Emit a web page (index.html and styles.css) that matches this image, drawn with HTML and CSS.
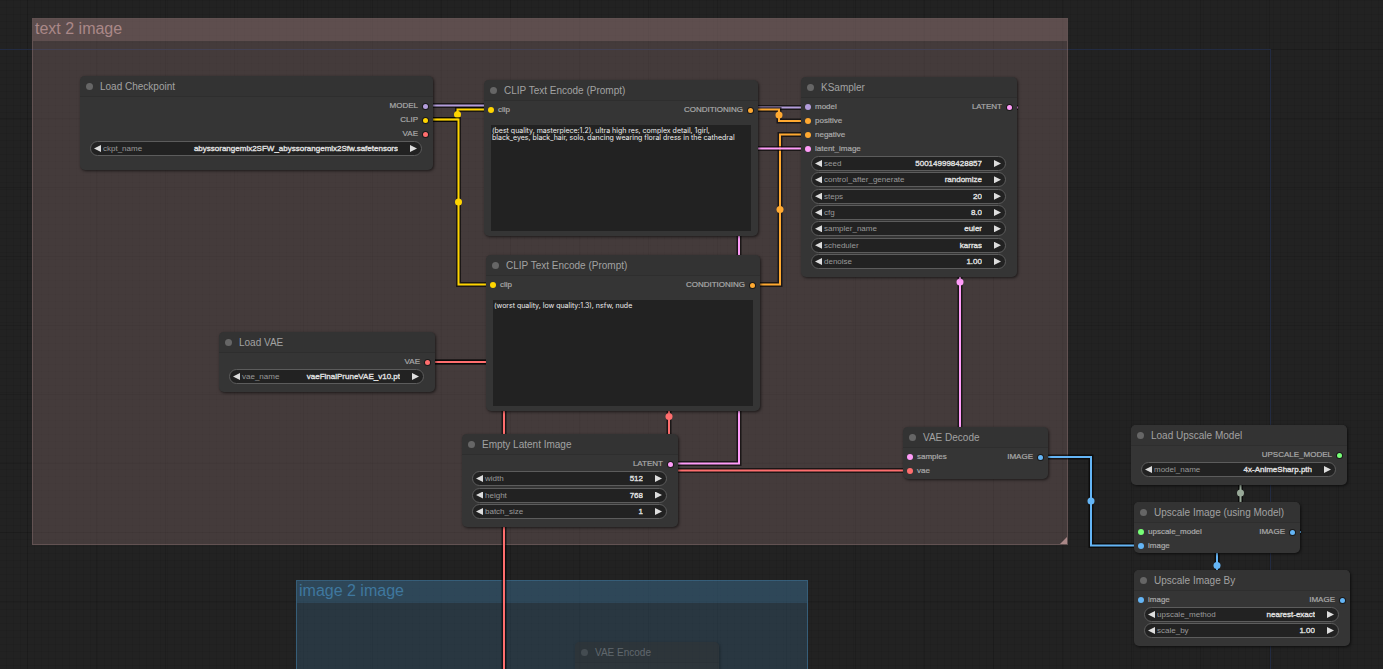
FILE: index.html
```html
<!DOCTYPE html>
<html lang="en">
<head>
<meta charset="utf-8">
<title>Node graph</title>
<link rel="stylesheet" href="styles.css">
</head>
<body>
<main class="canvas">
  <div class="bounds"></div>

  <section class="group group-text">
    <h2 class="group-title">text 2 image</h2>
    <span class="group-handle"></span>
  </section>
  <section class="group group-image">
    <h2 class="group-title">image 2 image</h2>
  </section>

  <svg class="links" aria-hidden="true">
    <defs>
      <path id="l-model" d="M425 105.5H616V107.5H808"/>
      <path id="l-clip1" d="M425 119.5H457.5V109.5H490"/>
      <path id="l-clip2" d="M425 119.5H458.5V284.5H492"/>
      <path id="l-pos" d="M751 109.5H779V121H808"/>
      <path id="l-neg" d="M753 284.5H780V134.5H808"/>
      <path id="l-empty" d="M670 463.5H739V148.5H808"/>
      <path id="l-vae1" d="M427 362H504V2000"/>
      <path id="l-vae2" d="M427 362H669V470.5H910"/>
      <path id="l-latent" d="M1010 107.5H1018H960V457H903H910"/>
      <path id="l-up" d="M1340 455H1347H1240.5V532H1134H1141"/>
      <path id="l-img1" d="M1041 457H1091V545.5H1141"/>
      <path id="l-img2" d="M1293 532H1301H1217V600H1134H1141"/>
    </defs>
    <g class="link vae"><use href="#l-vae1" class="edge"/><use href="#l-vae1"/></g>
    <g class="link vae"><use href="#l-vae2" class="edge"/><use href="#l-vae2"/><circle cx="669" cy="416.5" r="3.5"/></g>
    <g class="link model"><use href="#l-model" class="edge"/><use href="#l-model"/></g>
    <g class="link clip"><use href="#l-clip1" class="edge"/><use href="#l-clip1"/><circle cx="457.5" cy="114.5" r="3.5"/></g>
    <g class="link clip"><use href="#l-clip2" class="edge"/><use href="#l-clip2"/><circle cx="458.5" cy="202" r="3.5"/></g>
    <g class="link cond"><use href="#l-pos" class="edge"/><use href="#l-pos"/><circle cx="779" cy="115" r="3.5"/></g>
    <g class="link cond"><use href="#l-neg" class="edge"/><use href="#l-neg"/><circle cx="780" cy="209.5" r="3.5"/></g>
    <g class="link latent"><use href="#l-empty" class="edge"/><use href="#l-empty"/></g>
    <g class="link latent"><use href="#l-latent" class="edge"/><use href="#l-latent"/><circle cx="960" cy="282" r="3.5"/></g>
    <g class="link upscale"><use href="#l-up" class="edge"/><use href="#l-up"/><circle cx="1240.5" cy="493" r="3.5"/></g>
    <g class="link image"><use href="#l-img1" class="edge"/><use href="#l-img1"/><circle cx="1091" cy="501" r="3.5"/></g>
    <g class="link image"><use href="#l-img2" class="edge"/><use href="#l-img2"/><circle cx="1217" cy="565.5" r="3.5"/></g>
  </svg>

  <article class="node n-checkpoint">
    <header class="head"><button class="fold" aria-label="Collapse"></button><h3 class="name">Load Checkpoint</h3></header>
    <div class="slots">
      <ul class="ins"></ul>
      <ul class="outs"><li class="model">MODEL</li><li class="clip">CLIP</li><li class="vae">VAE</li></ul>
    </div>
    <div class="widgets">
      <div class="widget"><button class="prev" aria-label="Previous"></button><label for="ckpt">ckpt_name</label><select id="ckpt"><option>abyssorangemix2SFW_abyssorangemix2Sfw.safetensors</option></select><button class="next" aria-label="Next"></button></div>
    </div>
  </article>

  <article class="node n-positive">
    <header class="head"><button class="fold" aria-label="Collapse"></button><h3 class="name">CLIP Text Encode (Prompt)</h3></header>
    <div class="slots">
      <ul class="ins"><li class="clip">clip</li></ul>
      <ul class="outs"><li class="cond">CONDITIONING</li></ul>
    </div>
    <textarea class="prompt" aria-label="Positive prompt" spellcheck="false">(best quality, masterpiece:1.2), ultra high res, complex detail, 1girl,
black_eyes, black_hair, solo, dancing wearing floral dress in the cathedral</textarea>
  </article>

  <article class="node n-negative">
    <header class="head"><button class="fold" aria-label="Collapse"></button><h3 class="name">CLIP Text Encode (Prompt)</h3></header>
    <div class="slots">
      <ul class="ins"><li class="clip">clip</li></ul>
      <ul class="outs"><li class="cond">CONDITIONING</li></ul>
    </div>
    <textarea class="prompt" aria-label="Negative prompt" spellcheck="false">(worst quality, low quality:1.3), nsfw, nude</textarea>
  </article>

  <article class="node n-sampler">
    <header class="head"><button class="fold" aria-label="Collapse"></button><h3 class="name">KSampler</h3></header>
    <div class="slots">
      <ul class="ins"><li class="model">model</li><li class="cond">positive</li><li class="cond">negative</li><li class="latent">latent_image</li></ul>
      <ul class="outs"><li class="latent">LATENT</li></ul>
    </div>
    <div class="widgets">
      <div class="widget"><button class="prev" aria-label="Decrease"></button><label for="seed">seed</label><input id="seed" value="500149998428857"><button class="next" aria-label="Increase"></button></div>
      <div class="widget"><button class="prev" aria-label="Previous"></button><label for="control">control_after_generate</label><select id="control"><option>randomize</option></select><button class="next" aria-label="Next"></button></div>
      <div class="widget"><button class="prev" aria-label="Decrease"></button><label for="steps">steps</label><input id="steps" value="20"><button class="next" aria-label="Increase"></button></div>
      <div class="widget"><button class="prev" aria-label="Decrease"></button><label for="cfg">cfg</label><input id="cfg" value="8.0"><button class="next" aria-label="Increase"></button></div>
      <div class="widget"><button class="prev" aria-label="Previous"></button><label for="sampler">sampler_name</label><select id="sampler"><option>euler</option></select><button class="next" aria-label="Next"></button></div>
      <div class="widget"><button class="prev" aria-label="Previous"></button><label for="scheduler">scheduler</label><select id="scheduler"><option>karras</option></select><button class="next" aria-label="Next"></button></div>
      <div class="widget"><button class="prev" aria-label="Decrease"></button><label for="denoise">denoise</label><input id="denoise" value="1.00"><button class="next" aria-label="Increase"></button></div>
    </div>
  </article>

  <article class="node n-vae">
    <header class="head"><button class="fold" aria-label="Collapse"></button><h3 class="name">Load VAE</h3></header>
    <div class="slots">
      <ul class="ins"></ul>
      <ul class="outs"><li class="vae">VAE</li></ul>
    </div>
    <div class="widgets">
      <div class="widget"><button class="prev" aria-label="Previous"></button><label for="vae">vae_name</label><select id="vae"><option>vaeFinalPruneVAE_v10.pt</option></select><button class="next" aria-label="Next"></button></div>
    </div>
  </article>

  <article class="node n-empty">
    <header class="head"><button class="fold" aria-label="Collapse"></button><h3 class="name">Empty Latent Image</h3></header>
    <div class="slots">
      <ul class="ins"></ul>
      <ul class="outs"><li class="latent">LATENT</li></ul>
    </div>
    <div class="widgets">
      <div class="widget"><button class="prev" aria-label="Decrease"></button><label for="width">width</label><input id="width" value="512"><button class="next" aria-label="Increase"></button></div>
      <div class="widget"><button class="prev" aria-label="Decrease"></button><label for="height">height</label><input id="height" value="768"><button class="next" aria-label="Increase"></button></div>
      <div class="widget"><button class="prev" aria-label="Decrease"></button><label for="batch">batch_size</label><input id="batch" value="1"><button class="next" aria-label="Increase"></button></div>
    </div>
  </article>

  <article class="node n-decode">
    <header class="head"><button class="fold" aria-label="Collapse"></button><h3 class="name">VAE Decode</h3></header>
    <div class="slots">
      <ul class="ins"><li class="latent">samples</li><li class="vae">vae</li></ul>
      <ul class="outs"><li class="image">IMAGE</li></ul>
    </div>
  </article>

  <article class="node n-upmodel">
    <header class="head"><button class="fold" aria-label="Collapse"></button><h3 class="name">Load Upscale Model</h3></header>
    <div class="slots">
      <ul class="ins"></ul>
      <ul class="outs"><li class="on">UPSCALE_MODEL</li></ul>
    </div>
    <div class="widgets">
      <div class="widget"><button class="prev" aria-label="Previous"></button><label for="upmodel">model_name</label><select id="upmodel"><option>4x-AnimeSharp.pth</option></select><button class="next" aria-label="Next"></button></div>
    </div>
  </article>

  <article class="node n-upimage">
    <header class="head"><button class="fold" aria-label="Collapse"></button><h3 class="name">Upscale Image (using Model)</h3></header>
    <div class="slots">
      <ul class="ins"><li class="on">upscale_model</li><li class="image">image</li></ul>
      <ul class="outs"><li class="image">IMAGE</li></ul>
    </div>
  </article>

  <article class="node n-upby">
    <header class="head"><button class="fold" aria-label="Collapse"></button><h3 class="name">Upscale Image By</h3></header>
    <div class="slots">
      <ul class="ins"><li class="image">image</li></ul>
      <ul class="outs"><li class="image">IMAGE</li></ul>
    </div>
    <div class="widgets">
      <div class="widget"><button class="prev" aria-label="Previous"></button><label for="method">upscale_method</label><select id="method"><option>nearest-exact</option></select><button class="next" aria-label="Next"></button></div>
      <div class="widget"><button class="prev" aria-label="Decrease"></button><label for="scale">scale_by</label><input id="scale" value="1.00"><button class="next" aria-label="Increase"></button></div>
    </div>
  </article>

  <article class="node n-encode">
    <header class="head"><button class="fold" aria-label="Collapse"></button><h3 class="name">VAE Encode</h3></header>
  </article>
</main>
</body>
</html>
```
FILE: styles.css
```css
* {
  box-sizing: border-box;
}

body {
  margin: 0;
  background: #212121;
  font-family: "Liberation Sans", Arial, sans-serif;
}

button,
input,
select,
textarea {
  font: inherit;
  margin: 0;
  padding: 0;
  border: 0;
  outline: 0;
  background: none;
  appearance: none;
}

.canvas {
  position: relative;
  width: 100%;
  height: 100vh;
  overflow: hidden;
  background-color: #222;
  background-image:
    linear-gradient(90deg, rgba(0, 0, 0, 0.12) 1px, transparent 1px),
    linear-gradient(rgba(0, 0, 0, 0.12) 1px, transparent 1px),
    linear-gradient(90deg, rgba(0, 0, 0, 0.07) 1px, transparent 1px),
    linear-gradient(rgba(0, 0, 0, 0.07) 1px, transparent 1px);
  background-size: 69px 69px, 69px 69px, 7px 7px, 7px 7px;
  background-position: 27px 49px, 27px 49px, 6px 0, 6px 0;
}

/* Outline of the workspace origin */
.bounds {
  position: absolute;
  left: -1px;
  top: 49px;
  width: 1272px;
  bottom: -1px;
  border: 1px solid #222b42;
}

.links {
  position: absolute;
  inset: 0;
  width: 100%;
  height: 100%;
}

.link {
  fill: none;
  stroke: currentColor;
  stroke-width: 2;
}

.link .edge {
  stroke: rgba(0, 0, 0, 0.6);
  stroke-width: 5;
}

.link circle {
  fill: currentColor;
  stroke: none;
}

.model { --c: #b39ddb; }
.clip { --c: #ffd500; }
.vae { --c: #ff6e6e; }
.cond { --c: #ffa931; }
.latent { --c: #ff9cf9; }
.image { --c: #64b5f6; }
.upscale { --c: #99aa99; }
.on { --c: #77ff77; }

.link {
  color: var(--c);
}

/* Groups */
.group {
  position: absolute;
  border: 1px solid;
}

.group-text {
  left: 32px;
  top: 18px;
  width: 1036px;
  height: 527px;
  color: #aa8888;
  background: rgba(170, 136, 136, 0.25);
  border-color: rgba(170, 136, 136, 0.3);
}

.group-image {
  left: 296px;
  top: 580px;
  width: 512px;
  height: 300px;
  color: #3f789e;
  background: rgba(63, 120, 158, 0.25);
  border-color: rgba(63, 120, 158, 0.6);
}

.group-title {
  margin: 0;
  padding: 0 0 2px 2px;
  font-size: 16px;
  line-height: 20px;
  font-weight: 400;
  position: relative;
}

.group-title::before {
  content: "";
  position: absolute;
  inset: 0;
  background: currentColor;
  opacity: 0.25;
}

.group-handle {
  position: absolute;
  right: 0;
  bottom: 0;
  width: 7px;
  height: 7px;
  background: currentColor;
  clip-path: polygon(100% 0, 100% 100%, 0 100%);
}

/* Nodes */
.node {
  position: absolute;
  display: flex;
  flex-direction: column;
  width: 216px;
  border-radius: 5px;
  background: #353535;
  box-shadow: 1px 1px 3px rgba(0, 0, 0, 0.6);
  color: #aaa;
  font-size: 8px;
}

.n-checkpoint { left: 80px; top: 76px; width: 353px; height: 94px; }
.n-positive { left: 484px; top: 80px; width: 274px; height: 156px; }
.n-negative { left: 486px; top: 255px; width: 274px; height: 156px; }
.n-sampler { left: 801px; top: 77px; height: 200px; }
.n-vae { left: 219px; top: 332px; height: 60px; }
.n-empty { left: 462px; top: 434px; height: 93px; }
.n-decode { left: 903px; top: 427px; width: 145px; height: 52px; }
.n-upmodel { left: 1131px; top: 425px; height: 60px; }
.n-upimage { left: 1134px; top: 502px; width: 166px; height: 51px; }
.n-upby { left: 1134px; top: 570px; height: 76px; }
.n-encode { left: 575px; top: 642px; width: 144px; height: 52px; opacity: 0.45; }

.head {
  display: flex;
  align-items: center;
  gap: 7px;
  height: 21px;
  padding-left: 6px;
  border-radius: 5px 5px 0 0;
  background: #333;
  border-bottom: 1px solid #2e2e2e;
}

.fold {
  width: 7px;
  height: 7px;
  border-radius: 50%;
  background: #666;
}

.name {
  margin: 0;
  padding-top: 1px;
  font-size: 10px;
  line-height: 20px;
  font-weight: 400;
  color: #a2a2a2;
}

.slots {
  display: flex;
  justify-content: space-between;
  padding: 2px 5px 0 4px;
  -webkit-text-stroke: 0.2px #aaa;
}

.slots ul {
  margin: 0;
  padding: 0;
  list-style: none;
}

.slots li {
  display: flex;
  align-items: center;
  gap: 4px;
  height: 14px;
  line-height: 14px;
}

.slots .outs li {
  justify-content: flex-end;
  gap: 5px;
}

.ins li::before,
.outs li::after {
  content: "";
  width: 6px;
  height: 6px;
  border-radius: 50%;
  background: var(--c);
}

.outs li::after {
  width: 5px;
  height: 5px;
  box-shadow: 0 0 0 1px rgba(0, 0, 0, 0.5);
}

.widgets {
  flex: 1;
  display: flex;
  flex-direction: column;
  justify-content: space-between;
  padding: 0 11px 8px 10px;
}

.widget {
  display: flex;
  align-items: center;
  height: 15px;
  padding: 0 4px 0 3px;
  border: 1px solid #5c5c5c;
  border-radius: 8px;
  background: #222;
}

.widget label {
  margin-left: 2px;
  line-height: 13px;
  color: #999;
}

.widget input,
.widget select {
  flex: 1;
  width: 0;
  min-width: 0;
  height: 13px;
  margin-right: 12px;
  line-height: 13px;
  color: #ddd;
  text-align: right;
  text-align-last: right;
  -webkit-text-stroke: 0.4px #ddd;
}

.prev,
.next {
  width: 7px;
  height: 7px;
  background: #ddd;
  clip-path: polygon(0 50%, 100% 0, 100% 100%);
}

.next {
  clip-path: polygon(0 0, 100% 50%, 0 100%);
}

.prompt {
  flex: 1;
  margin: 8px 7px 5px;
  padding: 2px 1px;
  resize: none;
  overflow: hidden;
  background: #222;
  color: #eee;
  font-family: Inter, sans-serif;
  font-size: 7px;
  line-height: 7px;
  white-space: pre;
}
```
